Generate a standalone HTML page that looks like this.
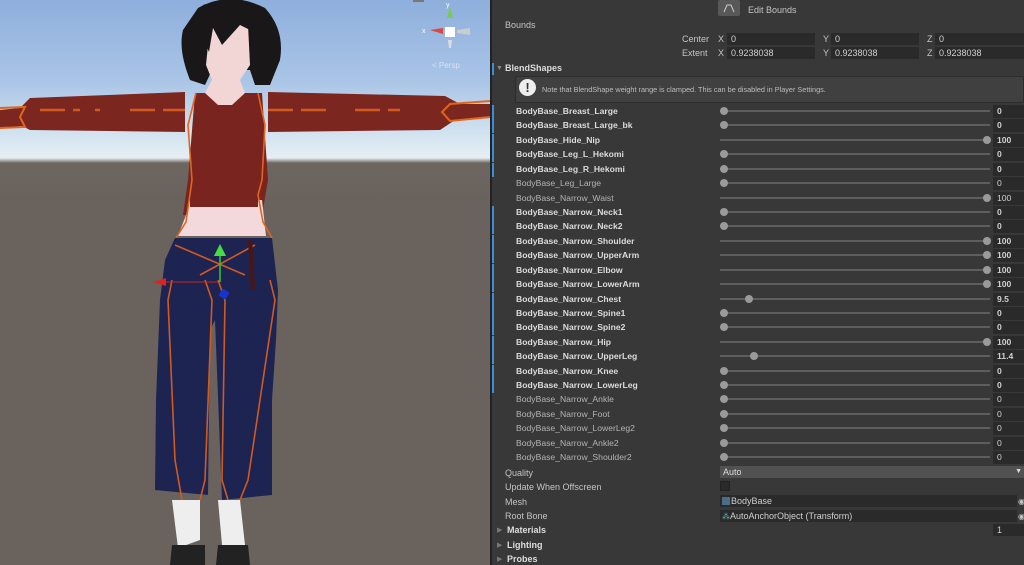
<!DOCTYPE html>
<html><head><meta charset="utf-8"><style>
*{margin:0;padding:0;box-sizing:border-box}
body{width:1024px;height:565px;overflow:hidden;position:relative;background:#383838;font-family:"Liberation Sans",sans-serif;font-size:9px;color:#c4c4c4}
#vp{position:absolute;left:0;top:0;width:490px;height:565px;overflow:hidden;background:linear-gradient(#8eafdc 0px,#a9c4e6 80px,#d7e6f1 140px,#e6eef2 158px,#6d6661 163px,#6a625d 200px,#6a625d 565px)}
#panel{position:absolute;left:490px;top:0;width:534px;height:565px;background:#383838}
#strip{position:absolute;left:0;top:0;width:2px;height:565px;background:#222}
.t{position:absolute;white-space:nowrap;line-height:11px}
.row{position:absolute;left:0;width:534px;height:14px}
.row .n{position:absolute;left:26px;top:1px;font-size:8.6px;color:#b4b4b4}
.row.b .n{font-weight:bold;color:#dcdcdc}
.row .tr{position:absolute;left:230px;width:270px;top:5px;height:2px;background:#5e5e5e}
.row .k{position:absolute;top:2px;width:8px;height:8px;border-radius:50%;background:#9a9a9a}
.row .v{position:absolute;left:503px;top:0;width:31px;height:13px;background:#2a2a2a;color:#d0d0d0;padding-left:4px;line-height:13px;font-size:8.6px}
.row.b .v{font-weight:bold}
.bl{position:absolute;left:2px;top:0;width:2px;height:14px;background:#3d8fd1}
.fld{position:absolute;background:#2a2a2a;height:12px;color:#d0d0d0;padding-left:4px;line-height:12px}
</style></head><body>
<div id="vp">
<svg width="490" height="565" viewBox="0 0 490 565">
 <path d="M0 110 L20 108 L30 98 L185 92 L185 132 L30 130 L22 126 L0 128Z" fill="#7c2620"/>
 <path d="M268 92 L445 96 L460 104 L490 104 L490 118 L455 120 L440 130 L268 132Z" fill="#7c2620"/>
 <path d="M0 108 L25 107 L20 117 L25 127 L0 128" fill="none" stroke="#e0661d" stroke-width="2"/>
 <path d="M490 101 L450 104 L442 112 L450 121 L490 117" fill="none" stroke="#e0661d" stroke-width="2"/>
 <path d="M40 110 H80 M95 110 H100 M130 110 H185 M268 110 H330 M355 110 H400" stroke="#d05a20" stroke-width="2.5" stroke-dasharray="25 8"/>
 <path d="M195 93 L262 93 L268 180 L262 215 L183 215 L188 180Z" fill="#7a2420"/>
 <path d="M198 8 Q230 -10 265 8 Q285 30 280 60 L270 85 L255 85 L250 70 L212 70 L205 85 L190 80 Q178 50 183 30Z" fill="#1a1718"/>
 <path d="M210 25 L248 25 L250 65 L240 80 L245 93 L232 105 L218 105 L205 93 L212 80 L206 65Z" fill="#f2d6d6"/>
 <path d="M203 5 Q235 -5 264 10 Q272 35 262 62 L255 55 L250 30 L240 25 L222 45 L213 28 L209 52 L202 35Z" fill="#1a1718"/>
 <path d="M190 200 L262 200 L266 236 L178 236 L186 215Z" fill="#f3d9db"/>
 <path d="M190 200 L258 200" stroke="#7a2420" stroke-width="14"/>
 <path d="M196 93 L188 125 L192 180 L186 222 L176 238 M258 93 L265 125 L262 180 L258 195 L263 222 L272 238" fill="none" stroke="#e0661d" stroke-width="1.6"/>
 <path d="M175 238 L272 238 L278 290 L276 340 L272 400 L272 495 L222 500 L215 320 L210 330 L208 495 L155 490 L156 400 L160 300 L165 260Z" fill="#1e2452"/>
 <path d="M172 280 L168 300 L175 460 L182 500 M205 280 L212 300 L205 480 L200 500 M218 280 L225 300 L222 480 L228 500 M270 280 L275 300 L248 480 L240 500 M175 245 L245 275 M255 245 L200 275" fill="none" stroke="#d05a20" stroke-width="1.6"/>
 <path d="M250 240 L253 290" stroke="#4a1515" stroke-width="4"/>
 <path d="M172 500 L200 500 L200 540 L178 548Z M218 500 L240 500 L245 545 L222 545Z" fill="#eee"/>
 <path d="M172 545 L205 545 L205 565 L170 565Z M218 545 L248 545 L250 565 L216 565Z" fill="#222"/>
 <path d="M220 282 V250" stroke="#3c3" stroke-width="1.5"/><path d="M214 256 L220 244 L226 256Z" fill="#4d4"/>
 <path d="M218 282 H160" stroke="#c22" stroke-width="1"/><path d="M153 282 L166 278 L166 286Z" fill="#d22"/>
 <rect x="220" y="290" width="8" height="8" fill="#1a33cc" transform="rotate(30 224 294)"/>
 <rect x="445" y="27" width="10" height="10" fill="#fff"/>
 <path d="M450 6 L447 18 L453 18Z" fill="#7c5"/><path d="M430 30 L443 28 L443 34Z" fill="#d44"/><path d="M470 28 L457 30 L457 33 L470 35Z" fill="#ccc"/><path d="M448 40 L452 40 L451 48 L449 48Z" fill="#ddd"/>
 <text x="446" y="7" font-size="7" fill="#fff" font-family="Liberation Sans">y</text>
 <text x="422" y="33" font-size="7" fill="#fff" font-family="Liberation Sans">x</text>
 <text x="432" y="68" font-size="8" fill="#d8e3ee" font-family="Liberation Sans">&lt; Persp</text>
 <rect x="413" y="0" width="11" height="2" fill="#777"/>
</svg>
</div>
<div id="panel">
 <div id="strip"></div>
 <div style="position:absolute;left:228px;top:0px;width:22px;height:16px;background:#585858;border-radius:2px"><svg width="22" height="16"><path d="M6 12 L9 5 L13 5 L16 12" fill="none" stroke="#ccc" stroke-width="1"/></svg></div>
 <div class="t" style="left:258px;top:5px">Edit Bounds</div>
 <div class="t" style="left:15px;top:20px">Bounds</div>
 <div class="t" style="left:192px;top:34px">Center</div>
 <div class="t" style="left:192px;top:48px">Extent</div>
 <div class="t" style="left:228px;top:34px">X</div><div class="fld" style="left:237px;top:33px;width:88px">0</div>
 <div class="t" style="left:333px;top:34px">Y</div><div class="fld" style="left:341px;top:33px;width:88px">0</div>
 <div class="t" style="left:437px;top:34px">Z</div><div class="fld" style="left:445px;top:33px;width:89px">0</div>
 <div class="t" style="left:228px;top:48px">X</div><div class="fld" style="left:237px;top:47px;width:88px">0.9238038</div>
 <div class="t" style="left:333px;top:48px">Y</div><div class="fld" style="left:341px;top:47px;width:88px">0.9238038</div>
 <div class="t" style="left:437px;top:48px">Z</div><div class="fld" style="left:445px;top:47px;width:89px">0.9238038</div>
 <div class="bl" style="top:63px;height:12px"></div>
 <div class="t" style="left:6px;top:63px;color:#888;font-size:7px">▼</div>
 <div class="t" style="left:15px;top:63px;font-weight:bold;color:#ddd">BlendShapes</div>
 <div style="position:absolute;left:25px;top:76px;width:509px;height:27px;background:#404040;border:1px solid #2c2c2c;border-radius:2px"></div>
 <div style="position:absolute;left:29px;top:79px;width:17px;height:17px;border-radius:50%;background:#eee;color:#333;font-weight:bold;font-size:13px;text-align:center;line-height:17px">!</div>
 <div class="t" style="left:52px;top:84px;font-size:7.3px;color:#bdbdbd">Note that BlendShape weight range is clamped. This can be disabled in Player Settings.</div>

 <div class="row b" style="top:105px"><div class="bl"></div><div class="n">BodyBase_Breast_Large</div><div class="tr"></div><div class="k" style="left:230px"></div><div class="v">0</div></div>
 <div class="row b" style="top:119.4px"><div class="bl"></div><div class="n">BodyBase_Breast_Large_bk</div><div class="tr"></div><div class="k" style="left:230px"></div><div class="v">0</div></div>
 <div class="row b" style="top:133.8px"><div class="bl"></div><div class="n">BodyBase_Hide_Nip</div><div class="tr"></div><div class="k" style="left:493px"></div><div class="v">100</div></div>
 <div class="row b" style="top:148.3px"><div class="bl"></div><div class="n">BodyBase_Leg_L_Hekomi</div><div class="tr"></div><div class="k" style="left:230px"></div><div class="v">0</div></div>
 <div class="row b" style="top:162.7px"><div class="bl"></div><div class="n">BodyBase_Leg_R_Hekomi</div><div class="tr"></div><div class="k" style="left:230px"></div><div class="v">0</div></div>
 <div class="row" style="top:177.1px"><div class="n">BodyBase_Leg_Large</div><div class="tr"></div><div class="k" style="left:230px"></div><div class="v">0</div></div>
 <div class="row" style="top:191.5px"><div class="n">BodyBase_Narrow_Waist</div><div class="tr"></div><div class="k" style="left:493px"></div><div class="v">100</div></div>
 <div class="row b" style="top:206px"><div class="bl"></div><div class="n">BodyBase_Narrow_Neck1</div><div class="tr"></div><div class="k" style="left:230px"></div><div class="v">0</div></div>
 <div class="row b" style="top:220.4px"><div class="bl"></div><div class="n">BodyBase_Narrow_Neck2</div><div class="tr"></div><div class="k" style="left:230px"></div><div class="v">0</div></div>
 <div class="row b" style="top:234.8px"><div class="bl"></div><div class="n">BodyBase_Narrow_Shoulder</div><div class="tr"></div><div class="k" style="left:493px"></div><div class="v">100</div></div>
 <div class="row b" style="top:249.2px"><div class="bl"></div><div class="n">BodyBase_Narrow_UpperArm</div><div class="tr"></div><div class="k" style="left:493px"></div><div class="v">100</div></div>
 <div class="row b" style="top:263.6px"><div class="bl"></div><div class="n">BodyBase_Narrow_Elbow</div><div class="tr"></div><div class="k" style="left:493px"></div><div class="v">100</div></div>
 <div class="row b" style="top:278px"><div class="bl"></div><div class="n">BodyBase_Narrow_LowerArm</div><div class="tr"></div><div class="k" style="left:493px"></div><div class="v">100</div></div>
 <div class="row b" style="top:292.5px"><div class="bl"></div><div class="n">BodyBase_Narrow_Chest</div><div class="tr"></div><div class="k" style="left:255px"></div><div class="v">9.5</div></div>
 <div class="row b" style="top:306.9px"><div class="bl"></div><div class="n">BodyBase_Narrow_Spine1</div><div class="tr"></div><div class="k" style="left:230px"></div><div class="v">0</div></div>
 <div class="row b" style="top:321.3px"><div class="bl"></div><div class="n">BodyBase_Narrow_Spine2</div><div class="tr"></div><div class="k" style="left:230px"></div><div class="v">0</div></div>
 <div class="row b" style="top:335.7px"><div class="bl"></div><div class="n">BodyBase_Narrow_Hip</div><div class="tr"></div><div class="k" style="left:493px"></div><div class="v">100</div></div>
 <div class="row b" style="top:350.2px"><div class="bl"></div><div class="n">BodyBase_Narrow_UpperLeg</div><div class="tr"></div><div class="k" style="left:260px"></div><div class="v">11.4</div></div>
 <div class="row b" style="top:364.6px"><div class="bl"></div><div class="n">BodyBase_Narrow_Knee</div><div class="tr"></div><div class="k" style="left:230px"></div><div class="v">0</div></div>
 <div class="row b" style="top:379px"><div class="bl"></div><div class="n">BodyBase_Narrow_LowerLeg</div><div class="tr"></div><div class="k" style="left:230px"></div><div class="v">0</div></div>
 <div class="row" style="top:393.4px"><div class="n">BodyBase_Narrow_Ankle</div><div class="tr"></div><div class="k" style="left:230px"></div><div class="v">0</div></div>
 <div class="row" style="top:407.8px"><div class="n">BodyBase_Narrow_Foot</div><div class="tr"></div><div class="k" style="left:230px"></div><div class="v">0</div></div>
 <div class="row" style="top:422.3px"><div class="n">BodyBase_Narrow_LowerLeg2</div><div class="tr"></div><div class="k" style="left:230px"></div><div class="v">0</div></div>
 <div class="row" style="top:436.7px"><div class="n">BodyBase_Narrow_Ankle2</div><div class="tr"></div><div class="k" style="left:230px"></div><div class="v">0</div></div>
 <div class="row" style="top:451.1px"><div class="n">BodyBase_Narrow_Shoulder2</div><div class="tr"></div><div class="k" style="left:230px"></div><div class="v">0</div></div>

 <div class="t" style="left:15px;top:468px">Quality</div>
 <div style="position:absolute;left:230px;top:466px;width:304px;height:12px;background:#515151;color:#ddd;padding-left:3px;line-height:12px">Auto<span style="position:absolute;right:2px;font-size:7px">▼</span></div>
 <div class="t" style="left:15px;top:482px">Update When Offscreen</div>
 <div style="position:absolute;left:230px;top:481px;width:10px;height:10px;background:#2a2a2a;border:1px solid #222"></div>
 <div class="t" style="left:15px;top:497px">Mesh</div>
 <div class="fld" style="left:230px;top:495px;width:297px;padding-left:2px"><span style="display:inline-block;width:8px;height:8px;background:#4a6d8a;vertical-align:-1px;margin-right:1px"></span>BodyBase</div>
 <div class="t" style="left:528px;top:496px;font-size:8px">◉</div>
 <div class="t" style="left:15px;top:511px">Root Bone</div>
 <div class="fld" style="left:230px;top:510px;width:297px;padding-left:2px"><span style="color:#7bc;font-size:8px">⁂</span>AutoAnchorObject (Transform)</div>
 <div class="t" style="left:528px;top:511px;font-size:8px">◉</div>
 <div class="t" style="left:7px;top:525px;color:#777;font-size:7px">▶</div><div class="t" style="left:17px;top:525px;font-weight:bold;color:#ddd">Materials</div>
 <div class="fld" style="left:503px;top:524px;width:31px">1</div>
 <div class="t" style="left:7px;top:540px;color:#777;font-size:7px">▶</div><div class="t" style="left:17px;top:540px;font-weight:bold;color:#ddd">Lighting</div>
 <div class="t" style="left:7px;top:554px;color:#777;font-size:7px">▶</div><div class="t" style="left:17px;top:554px;font-weight:bold;color:#ddd">Probes</div>
</div>
</body></html>
